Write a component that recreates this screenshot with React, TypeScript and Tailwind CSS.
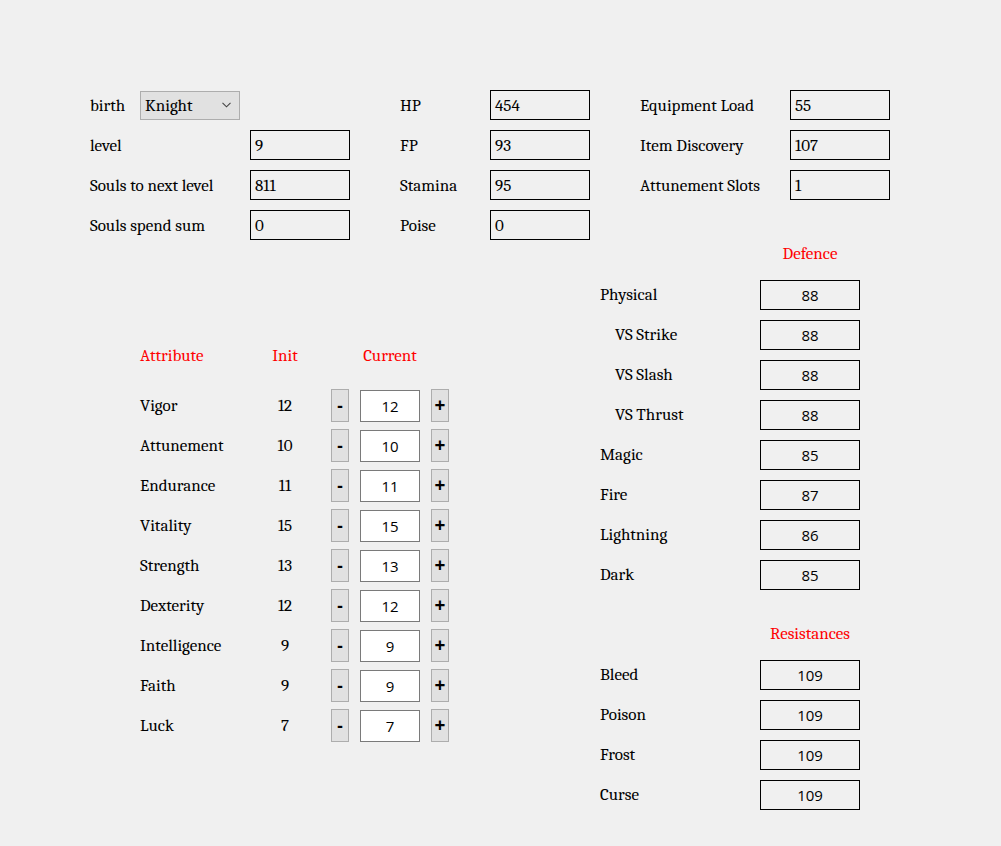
import React from 'react';

const serif = "font-['Cambria','Liberation_Serif',serif]";
const sans = "font-['Open_Sans','Noto_Sans',sans-serif]";

const topCol1 = [
  { label: 'level', value: '9' },
  { label: 'Souls to next level', value: '811' },
  { label: 'Souls spend sum', value: '0' },
];

const topCol2 = [
  { label: 'HP', value: '454' },
  { label: 'FP', value: '93' },
  { label: 'Stamina', value: '95' },
  { label: 'Poise', value: '0' },
];

const topCol3 = [
  { label: 'Equipment Load', value: '55' },
  { label: 'Item Discovery', value: '107' },
  { label: 'Attunement Slots', value: '1' },
];

const attributes = [
  { name: 'Vigor', init: 12 },
  { name: 'Attunement', init: 10 },
  { name: 'Endurance', init: 11 },
  { name: 'Vitality', init: 15 },
  { name: 'Strength', init: 13 },
  { name: 'Dexterity', init: 12 },
  { name: 'Intelligence', init: 9 },
  { name: 'Faith', init: 9 },
  { name: 'Luck', init: 7 },
];

const defence = [
  { label: 'Physical', value: 88, indent: false },
  { label: 'VS Strike', value: 88, indent: true },
  { label: 'VS Slash', value: 88, indent: true },
  { label: 'VS Thrust', value: 88, indent: true },
  { label: 'Magic', value: 85, indent: false },
  { label: 'Fire', value: 87, indent: false },
  { label: 'Lightning', value: 86, indent: false },
  { label: 'Dark', value: 85, indent: false },
];

const resistances = [
  { label: 'Bleed', value: 109 },
  { label: 'Poison', value: 109 },
  { label: 'Frost', value: 109 },
  { label: 'Curse', value: 109 },
];

function StatRow({ label, value }: { label: string; value: string }) {
  return (
    <div className="flex items-center justify-between h-[30px]">
      <span className="pt-[2px]">{label}</span>
      <div className="w-[100px] h-[30px] border border-black flex items-center pl-[4px] pt-[2px]">{value}</div>
    </div>
  );
}

function CenterBox({ label, value, indent }: { label: string; value: number; indent?: boolean }) {
  return (
    <div className="flex items-center h-[30px]">
      <span className={`w-[160px] ${indent ? 'pl-[15px]' : ''}`}>{label}</span>
      <div className={`w-[100px] h-[30px] border border-black flex items-center justify-center pt-[1px] ${sans} text-[15px]`}>
        {value}
      </div>
    </div>
  );
}

function Stepper({ value }: { value: number }) {
  return (
    <div className="flex items-center w-[118px] gap-[11px]">
      <button className={`w-[18px] h-[33px] bg-[#e1e1e1] border border-[#adadad] flex items-center justify-center ${sans} font-bold text-[17px] text-black`}>
        -
      </button>
      <div className={`w-[60px] h-[32px] bg-white border border-[#7a7a7a] flex items-center justify-center pt-[1px] ${sans} text-[15px]`}>
        {value}
      </div>
      <button className={`w-[18px] h-[33px] bg-[#e1e1e1] border border-[#adadad] flex items-center justify-center ${sans} font-bold text-[19px] text-black`}>
        +
      </button>
    </div>
  );
}

export default function App() {
  return (
    <div className={`w-[1001px] h-[846px] bg-[#f0f0f0] text-black text-[17px] ${serif}`}>
      {/* top summary */}
      <div className="flex pt-[90px] pl-[90px]">
        <div className="w-[260px] flex flex-col gap-[10px]">
          <div className="flex items-center h-[30px]">
            <span className="w-[50px] pt-[2px]">birth</span>
            <div className="w-[100px] h-[29px] bg-[#e1e1e1] border border-[#adadad] flex items-center justify-between pl-[4px] pr-[8px]">
              <span className="pt-[2px]">Knight</span>
              <svg width="9" height="6" viewBox="0 0 9 6" fill="none">
                <path d="M0.5 0.8 L4.5 4.8 L8.5 0.8" stroke="#444" strokeWidth="1.1" />
              </svg>
            </div>
          </div>
          {topCol1.map((r) => (
            <StatRow key={r.label} label={r.label} value={r.value} />
          ))}
        </div>
        <div className="w-[190px] ml-[50px] flex flex-col gap-[10px]">
          {topCol2.map((r) => (
            <StatRow key={r.label} label={r.label} value={r.value} />
          ))}
        </div>
        <div className="w-[250px] ml-[50px] flex flex-col gap-[10px]">
          {topCol3.map((r) => (
            <StatRow key={r.label} label={r.label} value={r.value} />
          ))}
        </div>
      </div>

      {/* bottom: attributes + defence */}
      <div className="flex">
        <div className="w-[600px] pl-[140px] pt-[101px]">
          <div className="flex items-center h-[30px] text-[#ff0000]">
            <span className="w-[120px]">Attribute</span>
            <span className="w-[50px] text-center">Init</span>
            <span className="w-[118px] ml-[21px] text-center">Current</span>
          </div>
          <div className="flex flex-col gap-[7px] mt-[18px]">
            {attributes.map((a) => (
              <div key={a.name} className="flex items-center h-[33px]">
                <span className="w-[120px]">{a.name}</span>
                <span className="w-[50px] text-center">{a.init}</span>
                <div className="ml-[21px]">
                  <Stepper value={a.init} />
                </div>
              </div>
            ))}
          </div>
        </div>

        <div className="w-[260px]">
          <div className="flex h-[30px] items-center -mt-px">
            <span className="w-[160px]" />
            <span className="w-[100px] text-center text-[#ff0000]">Defence</span>
          </div>
          <div className="flex flex-col gap-[10px] mt-[11px]">
            {defence.map((d) => (
              <CenterBox key={d.label} label={d.label} value={d.value} indent={d.indent} />
            ))}
          </div>
          <div className="flex h-[30px] items-center mt-[29px]">
            <span className="w-[160px]" />
            <span className="w-[100px] text-center text-[#ff0000]">Resistances</span>
          </div>
          <div className="flex flex-col gap-[10px] mt-[11px]">
            {resistances.map((d) => (
              <CenterBox key={d.label} label={d.label} value={d.value} />
            ))}
          </div>
        </div>
      </div>
    </div>
  );
}
